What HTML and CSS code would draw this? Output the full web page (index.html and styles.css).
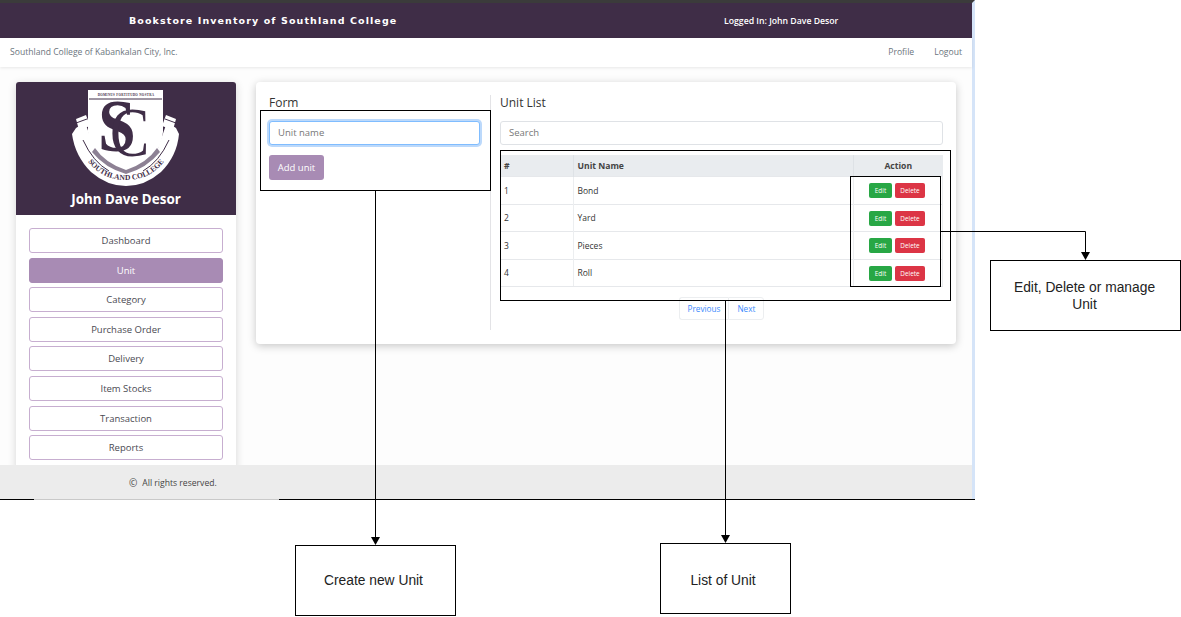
FILE: index.html
```html
<!DOCTYPE html>
<html lang="en">
<head>
<meta charset="utf-8">
<title>Bookstore Inventory of Southland College</title>
<link rel="stylesheet" href="styles.css">
</head>
<body>
<div class="stage">
  <div class="app">
    <header class="topbar">
      <div class="brand">Bookstore Inventory of Southland College</div>
      <div class="logged">Logged In: John Dave Desor</div>
    </header>
    <nav class="subbar">
      <span class="school">Southland College of Kabankalan City, Inc.</span>
      <span class="sublinks"><a>Profile</a><a>Logout</a></span>
    </nav>
    <main class="content">
      <aside class="side">
        <div class="side-head">
          <svg class="logo" viewBox="0 0 110 100" width="110" height="100" aria-hidden="true">
            <defs>
              <path id="arc" d="M13 68 Q28 92 55 92 Q82 92 97 68"/>
            </defs>
            <path class="w" d="M5 40 L14 34 L23 60 Q36 80 55 84 Q74 80 87 60 L96 34 L105 40 L108 46 Q106 68 90 84 Q74 98 55 98 Q36 98 20 84 Q4 68 1 46Z"/>
            <path class="w" d="M5 31 L15 27 L19 38 L8 42Z M105 31 L95 27 L91 38 L102 42Z"/>
            <path class="line" d="M5 35 L16 31 M105 35 L94 31 M12 52 Q22 74 38 83 M98 52 Q88 74 72 83"/>
            <path class="w" d="M17 2 H92 V44 Q90 70 55 92 Q19 70 17 44Z"/>
            <path class="g" d="M24 60 Q34 75 55 82 Q76 75 86 60 L89 64 Q76 80 55 86 Q34 80 21 64Z"/>
            <path class="line" d="M18 11 H91"/>
            <text class="motto" x="55" y="8" text-anchor="middle">DOMINUS FORTITUDO NOSTRA</text>
            <text class="bigs" transform="translate(27 63) scale(.92 1)">S</text>
            <text class="bigc" transform="translate(39 68) scale(.84 1)">C</text>
            <text class="ring"><textPath href="#arc" startOffset="50%" text-anchor="middle">SOUTHLAND COLLEGE</textPath></text>
          </svg>
          <div class="side-name">John Dave Desor</div>
        </div>
        <ul class="menu">
          <li><a class="item">Dashboard</a></li>
          <li><a class="item on">Unit</a></li>
          <li><a class="item">Category</a></li>
          <li><a class="item">Purchase Order</a></li>
          <li><a class="item">Delivery</a></li>
          <li><a class="item">Item Stocks</a></li>
          <li><a class="item">Transaction</a></li>
          <li><a class="item">Reports</a></li>
        </ul>
      </aside>
      <section class="panel">
        <div class="form-col">
          <h2 class="title">Form</h2>
          <div class="field focus">Unit name</div>
          <button class="add">Add unit</button>
        </div>
        <div class="list-col">
          <h2 class="title">Unit List</h2>
          <div class="field search">Search</div>
          <table class="units">
            <thead>
              <tr><th class="c1">#</th><th class="c2">Unit Name</th><th class="c3">Action</th></tr>
            </thead>
            <tbody>
              <tr><td>1</td><td>Bond</td><td class="act"><a class="b edit">Edit</a><a class="b del">Delete</a></td></tr>
              <tr><td>2</td><td>Yard</td><td class="act"><a class="b edit">Edit</a><a class="b del">Delete</a></td></tr>
              <tr><td>3</td><td>Pieces</td><td class="act"><a class="b edit">Edit</a><a class="b del">Delete</a></td></tr>
              <tr><td>4</td><td>Roll</td><td class="act"><a class="b edit">Edit</a><a class="b del">Delete</a></td></tr>
            </tbody>
          </table>
          <div class="pager"><a>Previous</a><a>Next</a></div>
        </div>
      </section>
    </main>
    <footer class="foot"><span class="copy">©</span>All rights reserved.</footer>
  </div>

  <div class="note box-form"></div>
  <div class="note box-table"></div>
  <div class="note box-action"></div>
  <div class="note label l-create">Create new Unit</div>
  <div class="note label l-list">List of Unit</div>
  <div class="note label l-edit">Edit, Delete or manage Unit</div>
  <div class="hr"></div>
  <svg class="wires" width="1181" height="617" aria-hidden="true">
    <path d="M375.5 191 V537 M725.5 301 V535 M941 231.5 H1085.5 V252"/>
    <path class="tip" d="M371 537 H380 L375.5 545Z M721 535 H730 L725.5 543Z M1081 252 H1090 L1085.5 260Z"/>
  </svg>
</div>
</body>
</html>
```
FILE: styles.css
```css
* { box-sizing: border-box; }
html, body { margin: 0; padding: 0; background: #fff; }
body { font-family: "Open Sans", "Noto Sans", sans-serif; color: #3f3f46; overflow: hidden; }
.stage { position: relative; width: 1181px; height: 617px; overflow: hidden; }

.app {
  width: 975px; height: 500px; display: flex; flex-direction: column;
  border-top: 3px solid #3b3b3b; border-right: 3px solid #d5e4f8; background: #fff;
}
.topbar {
  height: 35px; flex: none; background: #3f2d47; color: #fff;
  display: flex; align-items: center; font-size: 8.7px; font-weight: 600;
}
.brand {
  margin-left: 129px; width: 595px; font-family: "DejaVu Sans", sans-serif;
  font-weight: 700; font-size: 9.5px; letter-spacing: 1.1px;
}
.subbar {
  height: 29px; flex: none; display: flex; align-items: center; justify-content: space-between;
  padding: 0 10px 1px; font-size: 8.6px; color: #6c757d; background: #fff;
  box-shadow: 0 1px 3px rgba(0,0,0,.09); position: relative; z-index: 1;
}
.sublinks a { margin-left: 20px; }

.content {
  flex: 1; min-height: 0; display: flex; align-items: flex-start; gap: 20px;
  padding: 15px 16px 0; background: #fdfdfd; overflow: hidden;
}
.side {
  width: 220px; flex: none; background: #fff; border-radius: 3px 3px 0 0;
  box-shadow: 0 2px 8px rgba(0,0,0,.16);
}
.side-head {
  height: 133px; background: #3f2d47; border-radius: 3px 3px 0 0; padding-top: 6px;
  display: flex; flex-direction: column; align-items: center;
}
.logo { display: block; flex: none; overflow: visible; }
.w { fill: #fff; }
.g { fill: #8d8194; }
.line { fill: none; stroke: #3f2d47; stroke-width: 1; }
.motto { font: 700 3.2px "Liberation Serif", serif; fill: #3f2d47; letter-spacing: .3px; }
.bigs { font: 700 74px "Liberation Serif", serif; fill: #3f2d47; }
.bigc { font: 400 70px "Liberation Serif", serif; fill: #3f2d47; }
.ring { font: 700 7.6px "Liberation Serif", serif; fill: #3f2d47; }
.side-name {
  margin-top: 3px; color: #fff; font-size: 13.4px; font-weight: 700; line-height: 17px;
  font-family: "Noto Sans", sans-serif;
}
.menu { list-style: none; margin: 0; padding: 13px 13px 12px; display: flex; flex-direction: column; gap: 4.6px; }
.item {
  display: flex; align-items: center; justify-content: center; height: 25px;
  border: 1px solid #c7aed0; border-radius: 3px; font-size: 9.5px; color: #4a4a52; background: #fff;
}
.item.on { background: #a88bb4; border-color: #a88bb4; color: #fff; }

.panel {
  width: 700px; height: 262px; flex: none; background: #fff; border-radius: 4px;
  box-shadow: 0 2px 9px rgba(0,0,0,.22); display: flex; padding: 13px 13px 14px;
}
.form-col { width: 222px; flex: none; border-right: 1px solid #e3e3e6; padding-right: 10px; }
.list-col { flex: 1; padding-left: 9px; display: flex; flex-direction: column; }
.title { margin: 0; font-size: 12px; font-weight: 400; line-height: 16px; color: #333; }
.field {
  height: 24px; margin-top: 10px; border: 1px solid #dfe2e6; border-radius: 3px;
  font-size: 9.5px; color: #777; display: flex; align-items: center; padding: 0 0 1px 8px; background: #fff;
}
.field.focus { border-color: #80bdff; box-shadow: 0 0 0 2px #bcd9fb; }
.add {
  display: block; margin-top: 10px; width: 55px; height: 25px; border: 0; border-radius: 3px;
  background: #a88bb4; color: #fff; font: 9.5px "Open Sans", sans-serif; padding: 0;
}
.units { border-collapse: collapse; width: 100%; margin-top: 10px; table-layout: fixed; font-size: 8.5px; color: #333; }
.units th { background: #e9ecef; height: 21.5px; text-align: left; padding: 0 4px; color: #444; font-size: 8.6px; font-weight: 700; border-right: 1px solid #dee2e6; }
.units td { height: 27.5px; padding: 0 4px; border-top: 1px solid #e6e8eb; border-right: 1px solid #eceef0; }
.units tr:last-child td { border-bottom: 1px solid #e6e8eb; }
.c1 { width: 73px; }
.c3 { width: 89px; }
.units th.c3 { text-align: center; border-right: 0; }
.units td.act { text-align: center; white-space: nowrap; font-size: 0; padding: 1px 5px 0 3px; }
.b { display: inline-block; height: 15px; line-height: 15px; border-radius: 2px; color: #fff; font-size: 6.4px; font-weight: 400; text-align: center; }
.edit { width: 23px; background: #28a745; margin-right: 3px; }
.del { width: 30px; background: #dc3545; }
.pager { display: flex; justify-content: center; margin-top: 10px; }
.pager a { height: 23px; border: 1px solid #eceef0; display: flex; align-items: center; padding: 0 8px; font-size: 8.2px; color: #3d8bfd; }
.pager a:first-child { border-radius: 3px 0 0 3px; border-right: 0; }
.pager a:last-child { border-radius: 0 3px 3px 0; }

.foot {
  position: relative; z-index: 2; height: 35px; flex: none;
  background: #ececec; font-size: 8.6px; color: #444;
  display: flex; align-items: center; padding-left: 129px;
}
.copy { font-size: 10px; margin-right: 5px; }

.note { position: absolute; z-index: 3; }
.box-form { left: 260px; top: 110px; width: 231px; height: 81px; border: 1px solid #000; }
.box-table { left: 500px; top: 150px; width: 451px; height: 151px; border: 1px solid #000; }
.box-action { left: 850px; top: 176px; width: 91px; height: 111px; border: 1px solid #000; }
.label {
  background: #fff; border: 1px solid #000; display: flex; align-items: center; justify-content: center;
  text-align: center; font: 13.8px/17px "Liberation Sans", sans-serif; color: #222;
}
.l-create { left: 295px; top: 545px; width: 161px; height: 71px; padding-right: 4px; }
.l-list { left: 660px; top: 543px; width: 131px; height: 71px; padding: 3px 5px 0 0; }
.l-edit { left: 990px; top: 260px; width: 191px; height: 71px; padding: 0 18px 0 16px; }
.hr {
  position: absolute; z-index: 3; left: 0; top: 499px; width: 975px; height: 1px;
  background: linear-gradient(to right, #000 34px, #c9c9c9 34px, #c9c9c9 279px, #000 279px);
}
.wires { position: absolute; z-index: 3; left: 0; top: 0; pointer-events: none; }
.wires path { fill: none; stroke: #000; stroke-width: 1; }
.wires .tip { fill: #000; stroke: none; }
```
